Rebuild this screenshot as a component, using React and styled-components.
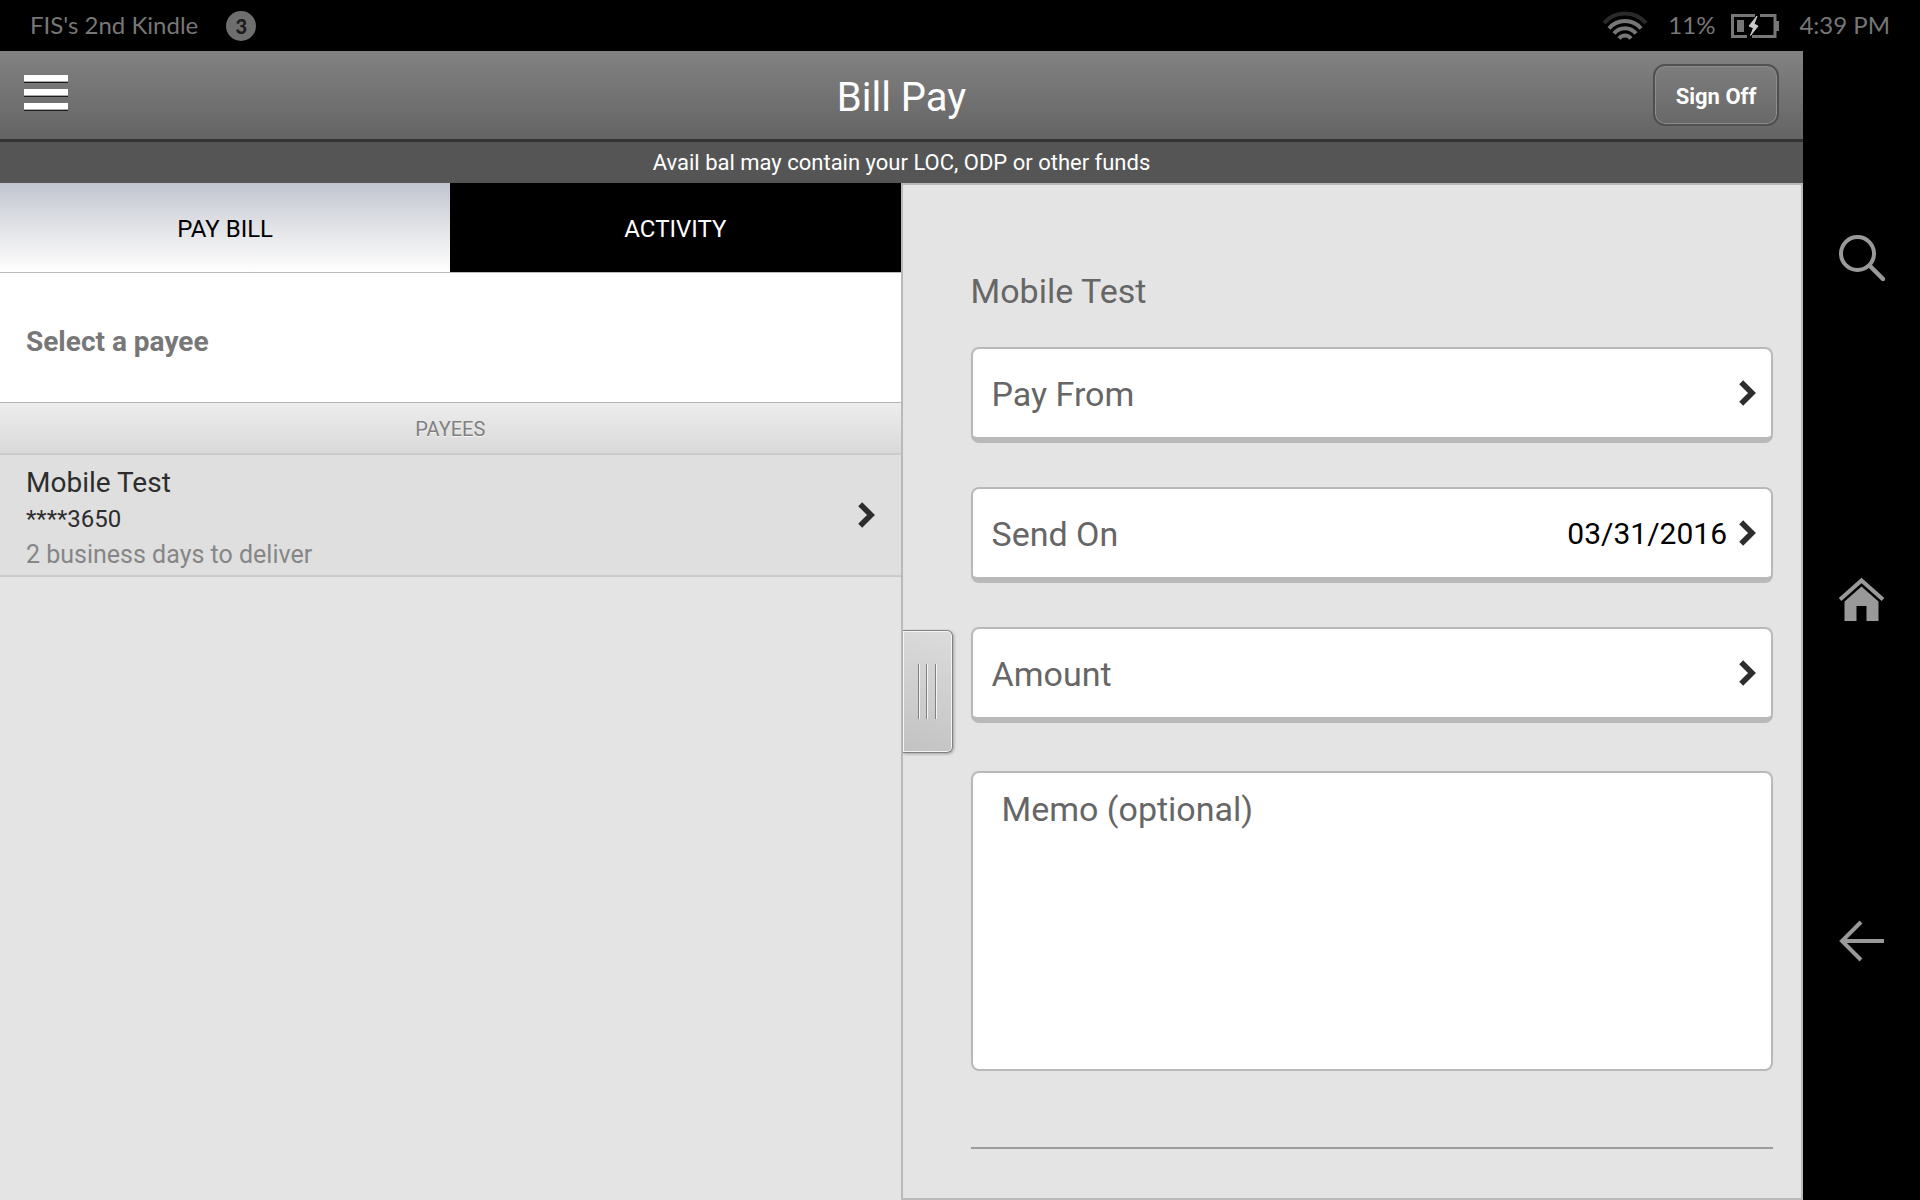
import React, { useState } from 'react';
import styled, { createGlobalStyle, css } from 'styled-components';

const GlobalStyle = createGlobalStyle`
  *, *::before, *::after {
    box-sizing: border-box;
  }

  body {
    margin: 0;
    background: #000;
    font-family: Roboto, 'Liberation Sans', sans-serif;
  }

  button, textarea {
    font-family: inherit;
  }
`;

const Device = styled.div`
  display: flex;
  flex-direction: column;
  min-height: 100vh;
  background: #000;
`;

const StatusBar = styled.div`
  display: flex;
  align-items: center;
  justify-content: space-between;
  height: 51px;
  padding: 0 30px;
  color: #777;
  font-family: Lato, 'Liberation Sans', sans-serif;
  font-size: 24px;
  line-height: 32px;
`;

const StatusGroup = styled.div`
  display: flex;
  align-items: center;
  gap: ${({ $gap }) => $gap};
`;

const StatusText = styled.span`
  padding-bottom: 2px;
`;

const Badge = styled.span`
  display: flex;
  align-items: center;
  justify-content: center;
  width: 30px;
  height: 30px;
  border-radius: 50%;
  background: #6e6e6e;
  color: #1c1c1c;
  font-size: 20px;
  font-weight: 900;
`;

const Screen = styled.div`
  flex: 1;
  display: flex;
`;

const AppArea = styled.div`
  flex: 1;
  min-width: 0;
  display: flex;
  flex-direction: column;
`;

const Header = styled.header`
  display: grid;
  grid-template-columns: 1fr auto 1fr;
  align-items: center;
  height: 91px;
  padding: 0 24px;
  background: linear-gradient(#828282, #646464);
  border-bottom: 3px solid #333;
`;

const Title = styled.h1`
  margin: 0;
  padding-top: 6px;
  color: #fff;
  font-size: 40px;
  font-weight: 400;
  line-height: 48px;
`;

const MenuButton = styled.button`
  justify-self: start;
  display: flex;
  padding: 0;
  border: none;
  background: none;
  cursor: pointer;
`;

const SignOffButton = styled.button`
  justify-self: end;
  height: 62px;
  width: 126px;
  padding: 2px 0 0;
  border: 2px solid #505050;
  border-radius: 12px;
  background: linear-gradient(#7d7d7d, #686868);
  box-shadow: inset 0 0 0 1px #8c8c8c;
  color: #fff;
  font-size: 22px;
  font-weight: 700;
  cursor: pointer;
`;

const Notice = styled.p`
  margin: 0;
  height: 41px;
  background: #555;
  color: #fff;
  font-size: 22px;
  line-height: 41px;
  text-align: center;
`;

const Panes = styled.main`
  flex: 1;
  display: flex;
`;

const PayeePane = styled.section`
  width: calc(50% - 1px);
  background: #e4e4e4;
`;

const Tabs = styled.div`
  display: flex;
  border-bottom: 1px solid #bbb;
`;

const Tab = styled.button`
  flex: 1;
  height: 89px;
  padding: 2px 0 0;
  border: none;
  background: #000;
  color: #fff;
  font-size: 24px;
  cursor: pointer;

  ${({ $active }) =>
    $active &&
    css`
      background: linear-gradient(#c1c5d0, #e2e3e7 50%, #fff);
      color: #000;
    `}
`;

const Prompt = styled.h2`
  margin: 0;
  padding: 53px 26px 44px;
  border-bottom: 1px solid #b4b4b4;
  background: #fff;
  color: #777;
  font-size: 28px;
  font-weight: 700;
  line-height: 32px;
`;

const ListHeading = styled.h3`
  margin: 0;
  height: 52px;
  border-bottom: 2px solid #cbcbcb;
  background: linear-gradient(#ededed, #d9d9d9);
  color: #808080;
  font-size: 20px;
  font-weight: 400;
  line-height: 52px;
  text-align: center;
  text-shadow: 0 1px 0 #f4f4f4;
`;

const PayeeRow = styled.button`
  display: flex;
  align-items: center;
  justify-content: space-between;
  width: 100%;
  height: 122px;
  padding: 0 26px;
  border: none;
  border-bottom: 2px solid #cbcbcb;
  background: #dfdfdf;
  text-align: left;
  cursor: pointer;
`;

const PayeeText = styled.span`
  display: flex;
  flex-direction: column;
  padding-top: 7px;
  color: #2d2d2d;
  font-size: 24px;
  line-height: 36px;
`;

const PayeeName = styled.span`
  font-size: 28px;
`;

const PayeeNote = styled.span`
  color: #868686;
  font-size: 25px;
`;

const PaymentPane = styled.section`
  position: relative;
  flex: 1;
  padding: 86px 28px 49px 68px;
  border: 2px solid #b9b9b9;
  background: #e4e4e4;
`;

const PaneHandle = styled.button`
  position: absolute;
  top: 445px;
  left: 0;
  display: flex;
  align-items: center;
  justify-content: center;
  width: 50px;
  height: 123px;
  padding: 0;
  border: 1px solid #808080;
  border-left: none;
  border-radius: 0 6px 6px 0;
  background: linear-gradient(20deg, #c2c2c2, #dcdcdc);
  box-shadow: inset 0 0 0 1px #f4f4f4, 1px 1px 3px rgba(0, 0, 0, 0.3);
  cursor: pointer;
`;

const PaneTitle = styled.h2`
  margin: 0 0 36px;
  color: #666;
  font-size: 34px;
  font-weight: 400;
  line-height: 40px;
`;

const Form = styled.form`
  display: flex;
  flex-direction: column;
  gap: 44px;
`;

const Field = styled.button`
  display: flex;
  align-items: center;
  height: 96px;
  padding: 0 15px 0 19px;
  border: 2px solid #b9b9b9;
  border-bottom-width: 6px;
  border-radius: 8px;
  background: #fff;
  color: #666;
  font-size: 34px;
  text-align: left;
  cursor: pointer;
`;

const FieldLabel = styled.span`
  flex: 1;
  padding-top: 2px;
`;

const FieldValue = styled.span`
  margin-right: 12px;
  color: #000;
  font-size: 30px;
`;

const Memo = styled.textarea`
  display: block;
  width: 100%;
  height: 300px;
  margin-top: 4px;
  padding: 16px 29px;
  border: 2px solid #b9b9b9;
  border-radius: 8px;
  background: #fff;
  color: #000;
  font-size: 34px;
  line-height: 40px;
  resize: none;

  &::placeholder {
    color: #666;
    opacity: 1;
  }
`;

const Divider = styled.hr`
  width: 100%;
  height: 2px;
  margin: 32px 0 0;
  border: none;
  background: #9d9d9d;
`;

const SystemNav = styled.nav`
  display: flex;
  flex-direction: column;
  align-items: center;
  justify-content: space-between;
  width: 117px;
  padding: 184px 0 236px;
`;

const SystemButton = styled.button`
  display: flex;
  padding: 0;
  border: none;
  background: none;
  color: #999;
  cursor: pointer;
`;

const Chevron = () => (
  <svg width="17" height="26" viewBox="0 0 17 26" aria-hidden="true">
    <path d="M2.2 2.2 13 13 2.2 23.8" fill="none" stroke="#2d2d2d" strokeWidth="5.6" />
  </svg>
);

const MenuIcon = () => (
  <svg width="44" height="48" viewBox="0 0 44 48" aria-hidden="true">
    {[4, 18, 32].map((y) => (
      <g key={y}>
        <rect y={y} width="44" height="6" fill="#fff" />
        <rect y={y + 6} width="44" height="1" fill="#aaa" />
        <rect y={y + 7} width="44" height="1" fill="#1c1c1c" />
      </g>
    ))}
  </svg>
);

const WifiIcon = () => (
  <svg width="46" height="30" viewBox="0 0 46 30" fill="none" stroke="#777" strokeWidth="4" aria-hidden="true">
    <path d="M2 12A28 28 0 0 1 44 12" stroke="#2a2a2a" />
    <path d="M7 17.5A21 21 0 0 1 39 17.5" />
    <path d="M12 22.5A14 14 0 0 1 34 22.500" />
    <path d="M17 27.500A7.500 7.500 0 0 1 29 27.500" />
  </svg>
);

const BatteryIcon = () => (
  <svg width="48" height="24" viewBox="0 0 48 24" aria-hidden="true">
    <path d="M24 1.5H1.5v21H16M29 1.5h15v21H21" fill="none" stroke="#777" strokeWidth="3" />
    <path d="M45 7h3v10h-3zM6 6h7v12H6z" fill="#777" />
    <path d="M26 2 18 12l4.500 2-3 7.500L27 12l-4-2z" fill="#ccc" stroke="#ccc" strokeLinejoin="round" />
  </svg>
);

const SearchIcon = () => (
  <svg width="46" height="46" viewBox="0 0 46 46" fill="none" stroke="currentColor" strokeWidth="4" aria-hidden="true">
    <circle cx="18.5" cy="18.5" r="16.5" />
    <path d="M30.5 30.5 44 44" strokeWidth="4.5" strokeLinecap="round" />
  </svg>
);

const HomeIcon = () => (
  <svg width="46" height="46" viewBox="0 0 46 46" aria-hidden="true">
    <path d="M1 22.500 22.500 3.500 44 22.500" fill="none" stroke="currentColor" strokeWidth="4" />
    <path d="M5.500 24.500 22.500 9.500l17 15V44h-12V29h-10v15h-12z" fill="currentColor" />
  </svg>
);

const BackIcon = () => (
  <svg width="46" height="46" viewBox="0 0 46 46" fill="none" stroke="currentColor" strokeWidth="4" aria-hidden="true">
    <path d="M22 4 3 23l19 19M4 23h41" />
  </svg>
);

const HandleGrip = () => (
  <svg width="20" height="55" viewBox="0 0 20 55" aria-hidden="true">
    {[1, 9, 18].map((x) => (
      <g key={x}>
        <rect x={x} width="1" height="55" fill="#808080" />
        <rect x={x + 1} width="1" height="55" fill="#f4f4f4" />
      </g>
    ))}
  </svg>
);

const tabs = ['PAY BILL', 'ACTIVITY'];

const payees = [
  { name: 'Mobile Test', account: '****3650', note: '2 business days to deliver' },
];

const fields = [
  { label: 'Pay From' },
  { label: 'Send On', value: '03/31/2016' },
  { label: 'Amount' },
];

const systemButtons = [
  { label: 'Search', icon: <SearchIcon /> },
  { label: 'Home', icon: <HomeIcon /> },
  { label: 'Back', icon: <BackIcon /> },
];

const App = () => {
  const [activeTab, setActiveTab] = useState('PAY BILL');
  const [selected, setSelected] = useState(payees[0]);
  const [memo, setMemo] = useState('');

  return (
    <Device>
      <GlobalStyle />
      <StatusBar>
        <StatusGroup $gap="28px">
          <StatusText>FIS's 2nd Kindle</StatusText>
          <Badge>3</Badge>
        </StatusGroup>
        <StatusGroup $gap="20px">
          <WifiIcon />
          <StatusGroup $gap="16px">
            <StatusText>11%</StatusText>
            <BatteryIcon />
          </StatusGroup>
          <StatusText>4:39 PM</StatusText>
        </StatusGroup>
      </StatusBar>
      <Screen>
        <AppArea>
          <Header>
            <MenuButton type="button" aria-label="Menu">
              <MenuIcon />
            </MenuButton>
            <Title>Bill Pay</Title>
            <SignOffButton type="button">Sign Off</SignOffButton>
          </Header>
          <Notice>Avail bal may contain your LOC, ODP or other funds</Notice>
          <Panes>
            <PayeePane>
              <Tabs role="tablist">
                {tabs.map((tab) => (
                  <Tab
                    key={tab}
                    type="button"
                    role="tab"
                    aria-selected={activeTab === tab}
                    $active={activeTab === tab}
                    onClick={() => setActiveTab(tab)}
                  >
                    {tab}
                  </Tab>
                ))}
              </Tabs>
              <Prompt>Select a payee</Prompt>
              <ListHeading>PAYEES</ListHeading>
              {payees.map((payee) => (
                <PayeeRow key={payee.account} type="button" onClick={() => setSelected(payee)}>
                  <PayeeText>
                    <PayeeName>{payee.name}</PayeeName>
                    <span>{payee.account}</span>
                    <PayeeNote>{payee.note}</PayeeNote>
                  </PayeeText>
                  <Chevron />
                </PayeeRow>
              ))}
            </PayeePane>
            <PaymentPane>
              <PaneHandle type="button" aria-label="Resize panel">
                <HandleGrip />
              </PaneHandle>
              <PaneTitle>{selected.name}</PaneTitle>
              <Form>
                {fields.map((field) => (
                  <Field key={field.label} type="button">
                    <FieldLabel>{field.label}</FieldLabel>
                    {field.value && <FieldValue>{field.value}</FieldValue>}
                    <Chevron />
                  </Field>
                ))}
                <Memo
                  aria-label="Memo (optional)"
                  placeholder="Memo (optional)"
                  value={memo}
                  onChange={(e) => setMemo(e.target.value)}
                />
                <Divider />
              </Form>
            </PaymentPane>
          </Panes>
        </AppArea>
        <SystemNav aria-label="System">
          {systemButtons.map((button) => (
            <SystemButton key={button.label} type="button" aria-label={button.label}>
              {button.icon}
            </SystemButton>
          ))}
        </SystemNav>
      </Screen>
    </Device>
  );
};

export default App;
